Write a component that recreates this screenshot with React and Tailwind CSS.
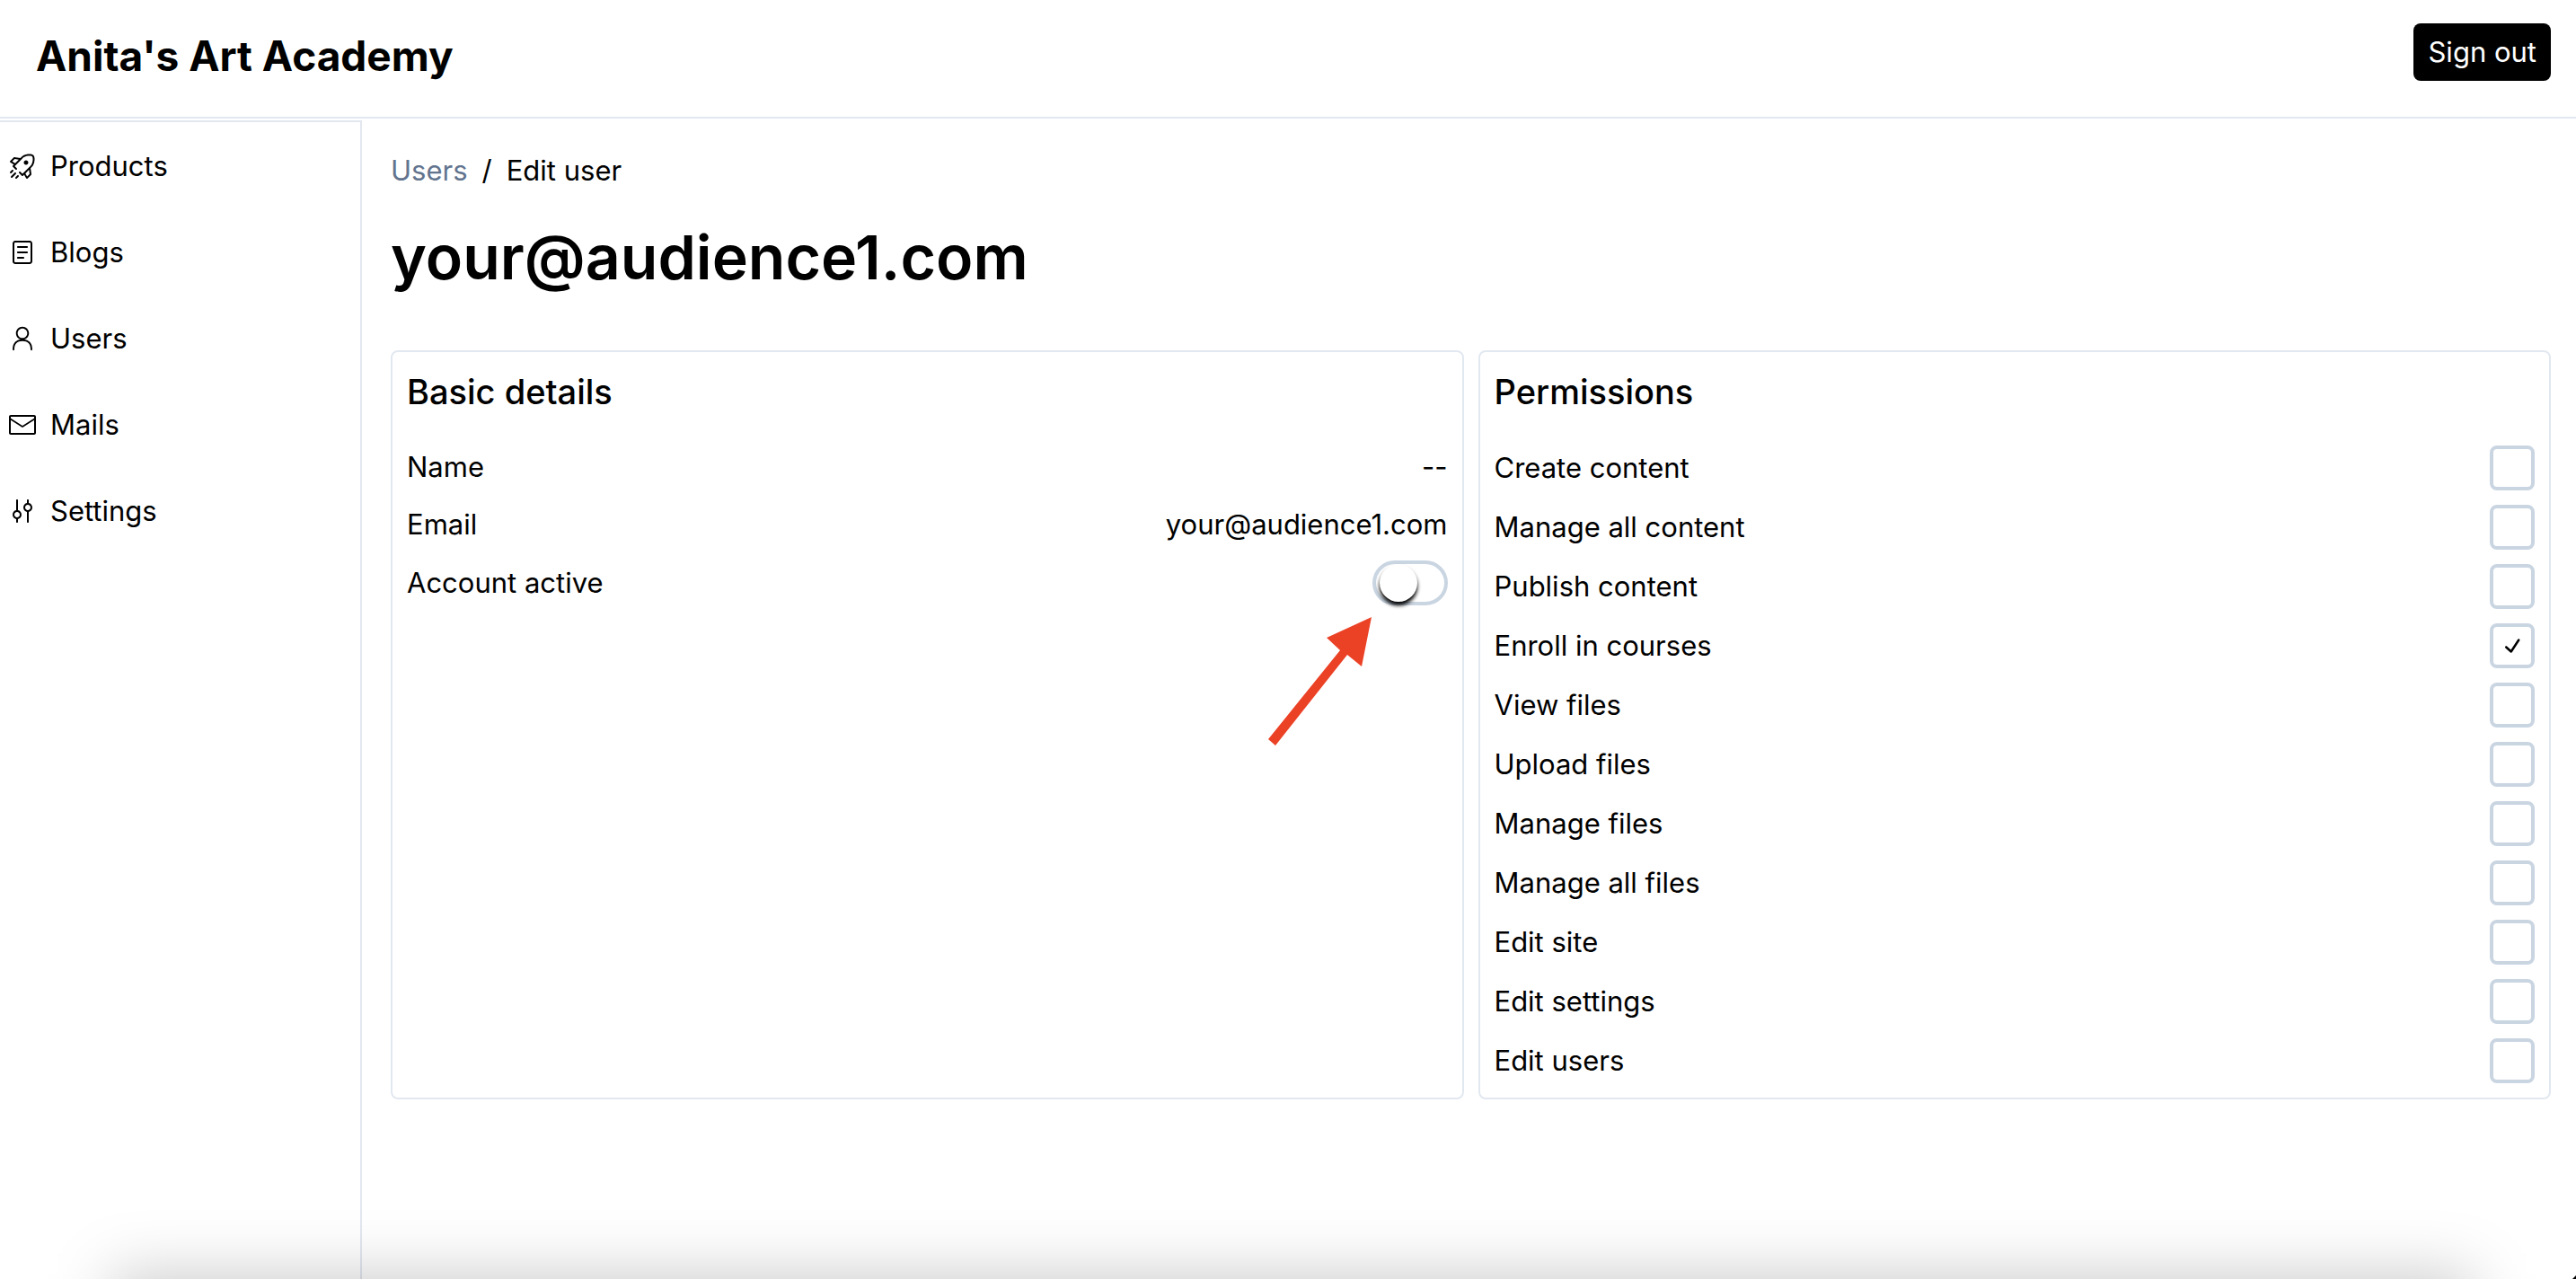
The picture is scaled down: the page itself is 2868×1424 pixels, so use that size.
import { useState } from "react";
import {
  RxCheck,
  RxEnvelopeClosed,
  RxMixerVertical,
  RxPerson,
  RxReader,
  RxRocket,
} from "react-icons/rx";

const navItems = [
  { label: "Products", Icon: RxRocket },
  { label: "Blogs", Icon: RxReader },
  { label: "Users", Icon: RxPerson },
  { label: "Mails", Icon: RxEnvelopeClosed },
  { label: "Settings", Icon: RxMixerVertical },
];

const permissionList = [
  "Create content",
  "Manage all content",
  "Publish content",
  "Enroll in courses",
  "View files",
  "Upload files",
  "Manage files",
  "Manage all files",
  "Edit site",
  "Edit settings",
  "Edit users",
];

function Header() {
  return (
    <header className="flex items-start justify-between border-b-2 border-slate-200 pt-[26px] pr-7 pb-8 pl-10">
      <a href="#" className="text-[46px] leading-[72px] font-bold">
        Anita's Art Academy
      </a>
      <button type="button" className="rounded-lg bg-black px-4 py-2 text-white">
        Sign out
      </button>
    </header>
  );
}

function Sidebar() {
  return (
    <nav className="w-[403px] shrink-0 border-t-2 border-r-2 border-slate-200">
      <ul className="pt-px">
        {navItems.map(({ label, Icon }) => (
          <li key={label}>
            <a href="#" className="flex items-center gap-4 px-[10px] py-6">
              <Icon size={30} aria-hidden="true" />
              {label}
            </a>
          </li>
        ))}
      </ul>
    </nav>
  );
}

function Card({ title, children }) {
  return (
    <section className="rounded-lg border-2 border-slate-200 p-4">
      <h2 className="mb-8 text-[38px] leading-[56px] font-medium">{title}</h2>
      <div className="flex flex-col gap-4">{children}</div>
    </section>
  );
}

function PermissionRow({ label, checked, onChange }) {
  return (
    <label className="flex items-center justify-between">
      {label}
      <span className="grid place-items-center">
        <input
          type="checkbox"
          checked={checked}
          onChange={onChange}
          className="col-start-1 row-start-1 size-[50px] appearance-none rounded-lg border-4 border-slate-300 bg-white"
        />
        {checked && (
          <RxCheck
            size={30}
            aria-hidden="true"
            className="pointer-events-none col-start-1 row-start-1"
          />
        )}
      </span>
    </label>
  );
}

function Arrow() {
  return (
    <svg
      width="116"
      height="144"
      viewBox="0 0 116 144"
      aria-hidden="true"
      className="pointer-events-none absolute top-[63px] right-[84px]"
    >
      <polygon
        points="115,0 65,23 80,37 0,136 8,143 88,42 104,55"
        fill="#eb4226"
      />
    </svg>
  );
}

export default function App() {
  const [active, setActive] = useState(false);
  const [granted, setGranted] = useState(["Enroll in courses"]);

  const toggle = (name) =>
    setGranted((list) =>
      list.includes(name) ? list.filter((n) => n !== name) : [...list, name]
    );

  return (
    <div className="relative flex min-h-screen flex-col bg-white font-['Inter',sans-serif] text-[31px] leading-[48px] text-black">
      <Header />
      <div className="mt-[2px] flex flex-1">
        <Sidebar />
        <main className="min-w-0 flex-1 pt-8 pr-7 pl-8">
          <nav aria-label="Breadcrumb" className="flex gap-4">
            <a href="#" className="text-slate-500">
              Users
            </a>
            <span>/</span>
            <span>Edit user</span>
          </nav>
          <h1 className="mt-8 mb-16 text-[68px] leading-[80px] font-semibold">
            your@audience1.com
          </h1>
          <div className="grid grid-cols-2 gap-4">
            <Card title="Basic details">
              <div className="flex justify-between">
                <span>Name</span>
                <span>--</span>
              </div>
              <div className="flex justify-between">
                <span>Email</span>
                <span>your@audience1.com</span>
              </div>
              <div className="relative flex items-center justify-between">
                <label htmlFor="active">Account active</label>
                <input
                  id="active"
                  type="checkbox"
                  role="switch"
                  checked={active}
                  onChange={() => setActive(!active)}
                  className="h-[50px] w-[84px] appearance-none rounded-full border-4 border-slate-300 bg-white pl-1 before:block before:size-[42px] before:rounded-full before:bg-white before:shadow-[0_4px_4px_#000] checked:pl-[30px]"
                />
                <Arrow />
              </div>
            </Card>
            <Card title="Permissions">
              {permissionList.map((name) => (
                <PermissionRow
                  key={name}
                  label={name}
                  checked={granted.includes(name)}
                  onChange={() => toggle(name)}
                />
              ))}
            </Card>
          </div>
        </main>
      </div>
      {/* Soft shadow along the bottom edge of the window */}
      <div
        aria-hidden="true"
        className="pointer-events-none absolute inset-x-0 bottom-0 h-40 overflow-hidden pt-[154px]"
      >
        <div className="mr-[115px] ml-[124px] h-80 bg-black/20 blur-[34px]" />
        <svg
          width="4"
          height="4"
          viewBox="0 0 4 4"
          className="absolute right-0 bottom-0"
        >
          <path d="M4 0V4H0Z" fill="#000" />
        </svg>
      </div>
    </div>
  );
}
